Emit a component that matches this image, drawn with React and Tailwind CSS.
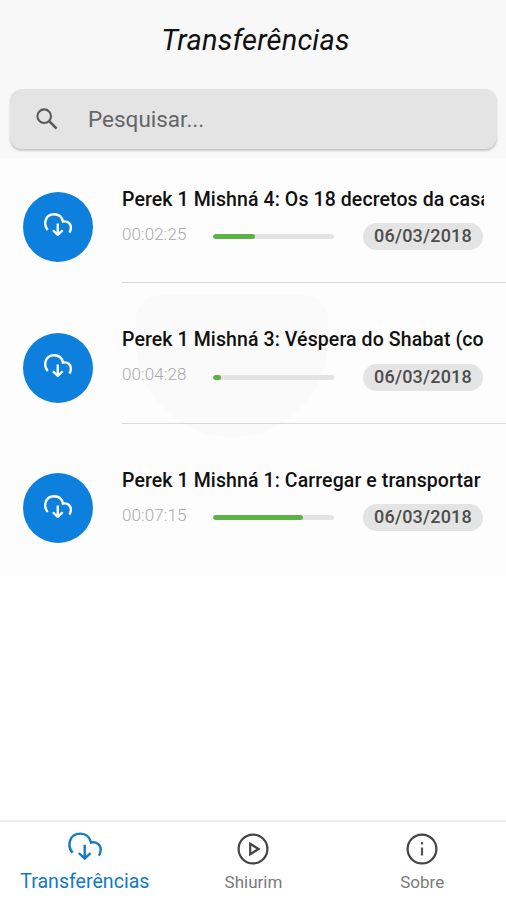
import React from "react";

const items = [
  { title: "Perek 1 Mishná 4: Os 18 decretos da casa", time: "00:02:25", date: "06/03/2018", progress: 35 },
  { title: "Perek 1 Mishná 3: Véspera do Shabat (co", time: "00:04:28", date: "06/03/2018", progress: 7 },
  { title: "Perek 1 Mishná 1: Carregar e transportar", time: "00:07:15", date: "06/03/2018", progress: 74.5 },
];

function CloudDownload({ className, strokeWidth }) {
  return (
    <svg viewBox="0 0 34 28" className={className} fill="none" stroke="currentColor" strokeWidth={strokeWidth}>
      <path d="M4.5 20.7C-1 14.5 .8 1.6 12.3 1.6C17.5 1.6 21.8 4.8 23 10.5C28.8 9.3 32.7 13 32.7 17.6C32.7 20.2 32 22.2 30.8 23.8" />
      <path d="M16.7 12.8V26.4M10.8 21L16.7 26.6L22.6 21" />
    </svg>
  );
}

function Row({ item, last }) {
  return (
    <li className="flex h-[140.7px] pl-[23px]">
      <div className="mt-[49.5px] flex h-[70px] w-[70px] shrink-0 items-center justify-center rounded-full bg-[#0c80dc] text-white">
        <CloudDownload className="mb-[4px] h-[23px] w-[28px]" strokeWidth={2.9} />
      </div>
      <div className={`ml-[29px] min-w-0 flex-1 pt-[44.4px] pr-[22px] ${last ? "" : "border-b border-[#d9d9d9]"}`}>
        <h2 className="h-[26px] overflow-hidden text-[19.5px] leading-[26px] font-medium tracking-[0.1px] whitespace-nowrap text-[#111]">{item.title}</h2>
        <div className="mt-[10.3px] flex items-center">
          <span className="relative -top-[3px] w-[91px] text-[17px] leading-[26px] font-light tracking-[0.1px] text-[#aaa]">{item.time}</span>
          <div className="h-[5px] w-[121px] overflow-hidden rounded-full bg-[#e3e3e3]">
            <div className="h-full rounded-full bg-[#5bb247]" style={{ width: `${item.progress}%` }} />
          </div>
          <span className="mr-[1px] ml-auto h-[27px] w-[120px] rounded-full bg-[#e4e4e4] text-center text-[18px] leading-[26px] font-medium tracking-[0.2px] text-[#4d4d4d]">{item.date}</span>
        </div>
      </div>
    </li>
  );
}

export default function App() {
  return (
    <div className="flex h-[900px] w-[506px] flex-col overflow-hidden bg-white font-['Roboto',sans-serif]">
      <header className="h-[158px] bg-[#f8f8f8] pr-[9px] pl-[10px] pt-[22px]">
        <h1 className="pl-[4px] text-center text-[29px] leading-[36px] tracking-[0.2px] text-[#111] italic">Transferências</h1>
        <div className="mt-[31px] flex h-[60px] items-center rounded-[12px] bg-[#e4e4e4] pl-[26px] shadow-[0_2px_2px_rgba(0,0,0,0.2)]">
          <svg viewBox="0 0 22 22" className="h-[22px] w-[22px]" fill="none" stroke="#5a5a5a" strokeWidth="2.1">
            <circle cx="8.2" cy="8.2" r="6.8" />
            <path d="M13.2 13.2L20.6 20.6" strokeWidth="2.6" />
          </svg>
          <span className="ml-[30px] text-[22.5px] leading-[30px] text-[#666]">Pesquisar...</span>
        </div>
      </header>
      <main className="relative h-[418px] bg-[#fdfdfd]">
        <div className="absolute top-[137px] left-[136px] h-[142px] w-[192px] rounded-t-[24px] rounded-b-[96px] bg-[#fafafa]" />
        <ul className="relative -mt-[15.6px]">
          {items.map((item, i) => (
            <Row key={item.title} item={item} last={i === items.length - 1} />
          ))}
        </ul>
      </main>
      <nav className="mt-auto grid h-[80px] grid-cols-3 border-t-2 border-[#ececec] bg-white text-[17px] leading-[24px] text-[#7a7a7a]">
        <div className="flex flex-col items-center pt-[10px] pl-[1px] text-[#127ac6]">
          <CloudDownload className="h-[28px] w-[34px]" strokeWidth={2.4} />
          <span className="mt-[10px] text-[19.6px]">Transferências</span>
        </div>
        <div className="flex flex-col items-center pt-[11px] pl-[1px]">
          <svg viewBox="0 0 32 32" className="h-[32px] w-[32px]" fill="none" stroke="#444" strokeWidth="2.2">
            <circle cx="16" cy="16" r="14.4" />
            <path d="M13.2 10.8L21.6 16L13.2 21.2Z" />
          </svg>
          <span className="mt-[5px]">Shiurim</span>
        </div>
        <div className="flex flex-col items-center pt-[11px] pl-[1px]">
          <svg viewBox="0 0 32 32" className="h-[32px] w-[32px]" fill="none" stroke="#444" strokeWidth="2.2">
            <circle cx="16" cy="16" r="14.4" />
            <path d="M16 14.5V22.5M16 9V11.5" stroke="#555" strokeWidth="2.2" />
          </svg>
          <span className="mt-[5px]">Sobre</span>
        </div>
      </nav>
    </div>
  );
}
